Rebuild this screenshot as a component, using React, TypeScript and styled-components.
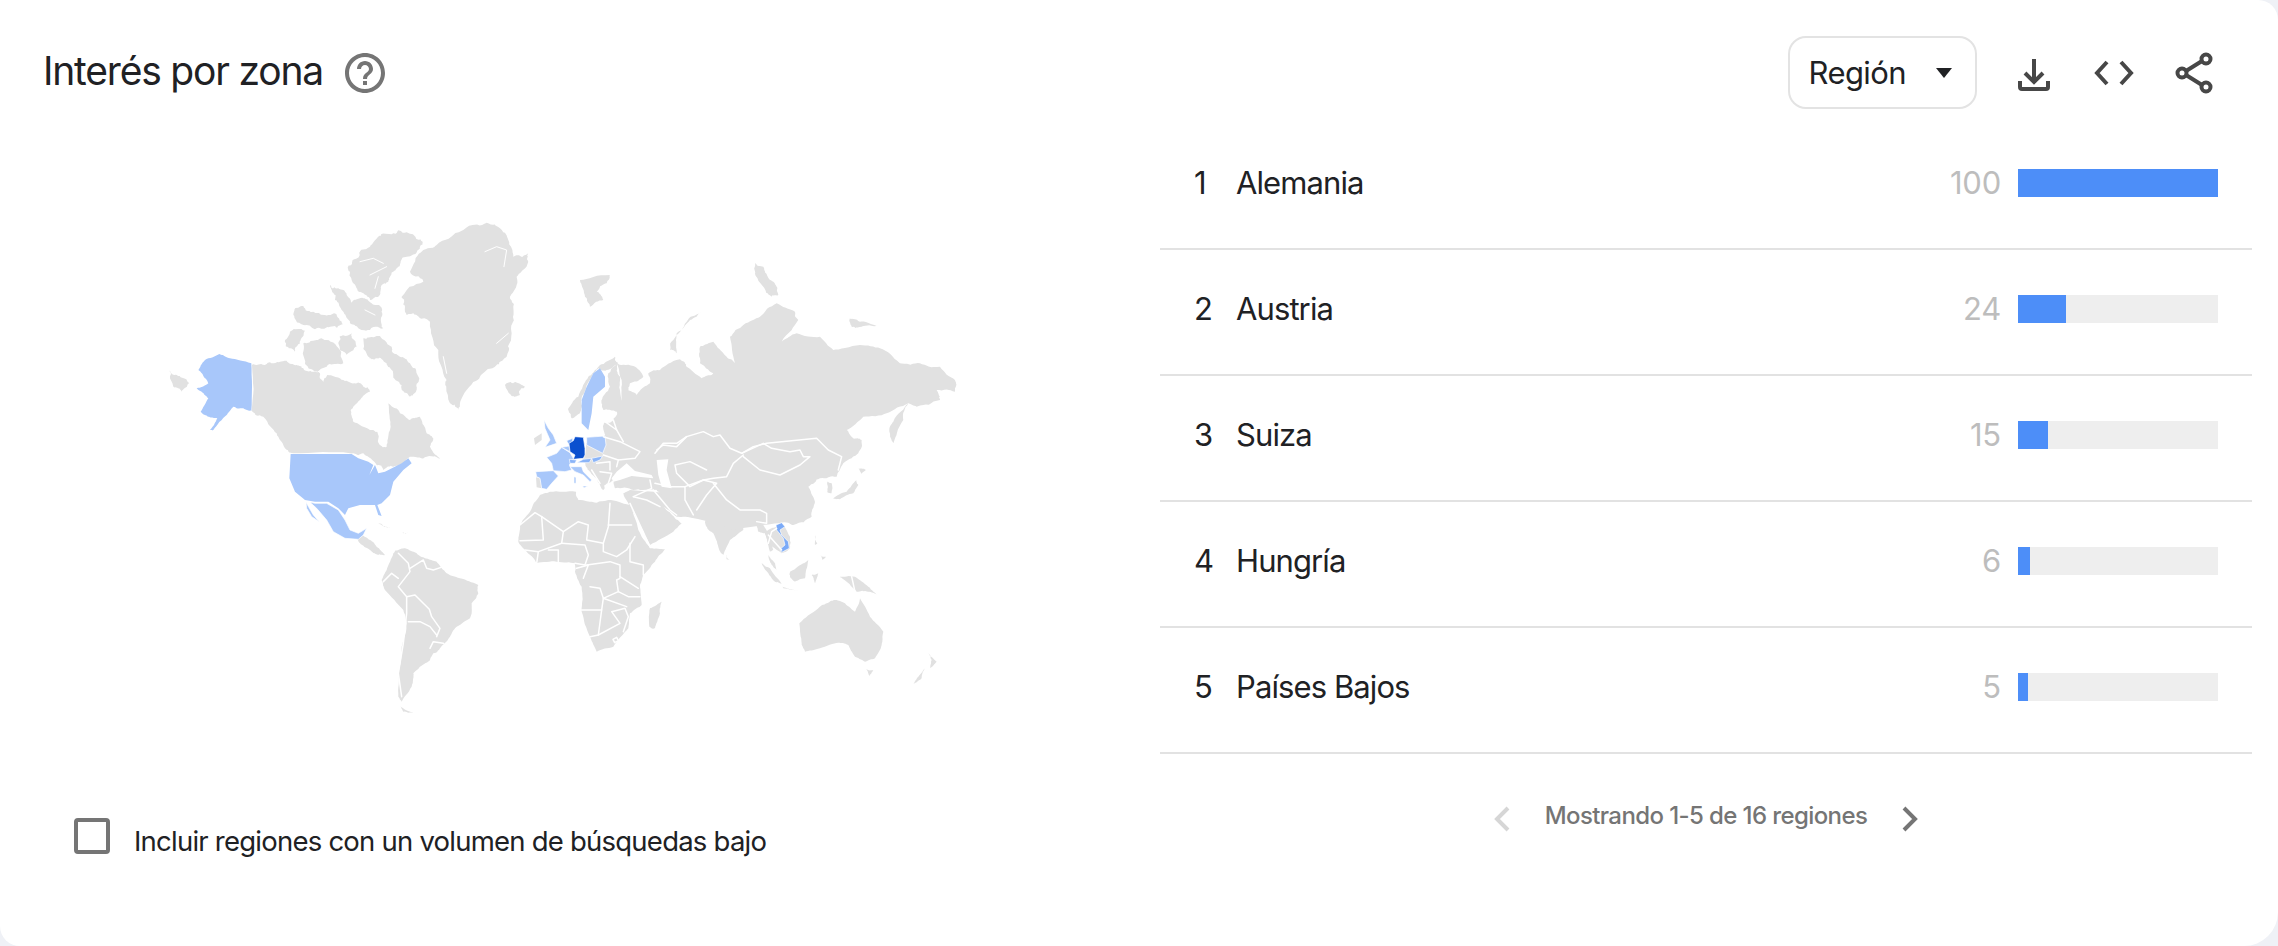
import React from "react"
import styled, { createGlobalStyle } from "styled-components"

const GREY = "#e1e1e1"
const LIGHT = "#a8c7fa"
const MID = "#8ab4f8"
const DARK = "#0b50cf"

type Row = { rank: number; name: string; value: number }

const rows: Row[] = [
  { rank: 1, name: "Alemania", value: 100 },
  { rank: 2, name: "Austria", value: 24 },
  { rank: 3, name: "Suiza", value: 15 },
  { rank: 4, name: "Hungría", value: 6 },
  { rank: 5, name: "Países Bajos", value: 5 },
]

const GlobalStyle = createGlobalStyle`
  html, body {
    margin: 0;
    background: #eff1f6;
  }
  body {
    font-family: Inter, "Noto Sans", sans-serif;
    font-weight: 375;
    color: #202124;
  }
`

const Card = styled.main`
  width: 2278px;
  height: 946px;
  box-sizing: border-box;
  padding: 36px 0 0;
  background: #fff;
  border-radius: 0 20px 34px 20px;
  overflow: hidden;
`

const Header = styled.header`
  display: flex;
  align-items: center;
  justify-content: space-between;
  height: 73px;
  padding: 0 60px 0 43px;
`

const TitleGroup = styled.div`
  display: flex;
  align-items: center;
  gap: 18px;
`

const Title = styled.h2`
  margin: 0 0 4px;
  font-size: 39px;
  font-weight: 375;
  letter-spacing: -1.2px;
  color: #202124;
`

const Actions = styled.div`
  display: flex;
  align-items: center;
  gap: 32px;
`

const Dropdown = styled.button`
  display: flex;
  align-items: center;
  gap: 30px;
  height: 73px;
  box-sizing: border-box;
  padding: 0 23px 0 19px;
  margin-right: 1px;
  background: #fff;
  border: 2px solid #e3e3e3;
  border-radius: 18px;
  font: 375 31px Inter, sans-serif;
  letter-spacing: -0.6px;
  color: #202124;
`

const Caret = styled.span`
  width: 0;
  height: 0;
  border-left: 8px solid transparent;
  border-right: 8px solid transparent;
  border-top: 10px solid #202124;
`

const Columns = styled.div`
  display: grid;
  grid-template-columns: 1160px 1092px;
`

const LeftColumn = styled.section`
  display: flex;
  flex-direction: column;
  align-items: flex-start;
`

const WorldMap = styled.svg`
  display: block;
  width: 800px;
  height: 500px;
  margin: 111px 0 0 160px;
  filter: blur(0.45px);
`

const CheckRow = styled.label`
  display: flex;
  align-items: flex-start;
  gap: 24px;
  margin: 98px 0 0 74px;
  font-size: 27.5px;
  letter-spacing: -0.77px;
  color: #202124;
`

const CheckBox = styled.span`
  display: block;
  width: 36px;
  height: 36px;
  box-sizing: border-box;
  border: 4px solid #757575;
  border-radius: 4px;
`

const CheckText = styled.span`
  margin-top: 5px;
  line-height: 36px;
`

const RightColumn = styled.section`
  padding-top: 15px;
`

const List = styled.ol`
  margin: 0;
  padding: 0;
  list-style: none;
`

const ListRow = styled.li`
  display: flex;
  align-items: flex-start;
  height: 126px;
  box-sizing: border-box;
  padding: 45px 34px 0 34px;
  border-bottom: 2px solid #e2e2e2;
  font-size: 31px;
  line-height: 27px;
`

const Rank = styled.span`
  width: 42px;
  flex: none;
`

const Name = styled.span`
  flex: 1;
  letter-spacing: -0.9px;
`

const Value = styled.span`
  margin-right: 17px;
  color: #bdbdbd;
  letter-spacing: -0.2px;
`

const Track = styled.div`
  width: 200px;
  height: 28px;
  flex: none;
  background: #eeeeee;
`

const Fill = styled.div`
  height: 100%;
  background: #4d8ef8;
`

const Pager = styled.nav`
  display: flex;
  align-items: center;
  justify-content: center;
  gap: 32px;
  padding-top: 47px;
  font-size: 24px;
  font-weight: 450;
  letter-spacing: -0.6px;
  color: #757575;
`

const PagerText = styled.span`
  margin-bottom: 6px;
`

const Chevron = styled.svg<{ $off?: boolean }>`
  display: block;
  width: 20px;
  height: 28px;
  color: ${(p) => (p.$off ? "#d6d6d6" : "#757575")};
`

const HelpIcon = () => (
  <svg width="48" height="48" viewBox="0 0 24 24" fill="#757575">
    <path d="M11 18h2v-2h-2v2zm1-16C6.48 2 2 6.48 2 12s4.48 10 10 10 10-4.48 10-10S17.52 2 12 2zm0 18c-4.41 0-8-3.59-8-8s3.59-8 8-8 8 3.59 8 8-3.59 8-8 8zm0-14c-2.21 0-4 1.79-4 4h2c0-1.1.9-2 2-2s2 .9 2 2c0 2-3 1.75-3 5h2c0-2.25 3-2.5 3-5 0-2.21-1.79-4-4-4z" />
  </svg>
)

const DownloadIcon = () => (
  <svg width="48" height="48" viewBox="0 0 48 48" fill="none" stroke="#474747" strokeWidth="4">
    <path d="M24 10v23M15 24l9 9 9-9" />
    <path d="M10 32v6a2 2 0 0 0 2 2h24a2 2 0 0 0 2-2v-6" />
  </svg>
)

const CodeIcon = () => (
  <svg width="48" height="48" viewBox="0 0 48 48" fill="none" stroke="#474747" strokeWidth="4">
    <path d="M17 13 7 24l10 11M31 13l10 11-10 11" />
  </svg>
)

const ShareIcon = () => (
  <svg width="48" height="48" viewBox="0 0 48 48" fill="none" stroke="#474747" strokeWidth="4">
    <circle cx="36" cy="10" r="4.5" />
    <circle cx="12" cy="24" r="4.5" />
    <circle cx="36" cy="38" r="4.5" />
    <path d="M16 22 32 12M16 26l16 10" />
  </svg>
)

// coasts are only outlined by hand, so break the long edges up a little
const roughen = (pts: string, amp: number) => {
  let seed = pts.length * 7 + 13
  const rnd = () => {
    seed = (seed * 16807) % 2147483647
    return seed / 2147483647 - 0.5
  }
  let p = pts.split(" ").map((s) => s.split(",").map(Number))
  for (let depth = 0; depth < 3; depth++) {
    const next: number[][] = []
    p.forEach((q, i) => {
      const r = p[(i + 1) % p.length]
      const len = Math.hypot(r[0] - q[0], r[1] - q[1])
      const a = Math.min(amp / 2 ** depth, len * 0.45)
      next.push(q, [(q[0] + r[0]) / 2 + rnd() * a, (q[1] + r[1]) / 2 + rnd() * a])
    })
    p = next
  }
  return p.map((q) => q.map((n) => n.toFixed(1)).join(",")).join(" ")
}

// each frame holds points read from a crop of the map, at 3x of its page offset
const Frame = ({ x, y, children }: { x: number; y: number; children: React.ReactNode }) => (
  <g transform={`translate(${x} ${y}) scale(0.3333)`}>{children}</g>
)

type LandProps = { items: string[]; fill?: string; edge?: boolean; rough?: number }

const Land = ({ items, fill = GREY, edge, rough = 0 }: LandProps) => (
  <g fill={fill} stroke={edge ? "#fff" : "none"} strokeWidth={edge ? 2 : 0} strokeLinejoin="round">
    {items.map((p) => (
      <polygon key={p} points={rough ? roughen(p, rough) : p} />
    ))}
  </g>
)

const Borders = ({ items, thin }: { items: string[]; thin?: boolean }) => (
  <g fill="none" stroke="#fff" strokeWidth={thin ? 3 : 4.5} strokeLinejoin="round" strokeLinecap="round">
    {items.map((p) => (
      <polyline key={p} points={p} />
    ))}
  </g>
)

const canada = [
  "366,495 405,495 430,490 470,482 500,495 520,505 545,515 570,520 580,545 592,525 640,540 680,550 700,560 720,575 690,600 662,630 670,665 720,690 745,705 750,735 770,740 782,680 775,610 810,640 840,660 870,650 890,700 910,715 900,740 930,775 890,770 850,770 820,790 790,800 760,810 740,795 700,760 660,760 490,760 465,745 440,700 400,650 365,632",
]

const arctic = [
  "660,215 668,180 690,155 720,140 745,110 790,100 830,97 878,125 870,145 830,170 810,195 790,215 775,245 755,255 745,290 720,300 700,280 680,265",
  "600,255 625,265 650,285 665,310 700,295 725,310 755,325 755,350 760,385 720,390 685,385 660,370 640,335 615,300",
  "700,415 750,408 785,440 810,470 840,490 868,535 860,570 840,590 815,555 790,530 770,490 740,475 715,470",
  "468,440 480,395 525,392 510,430 495,455",
  "520,430 560,420 590,420 630,450 640,490 590,500 555,515 525,490",
  "490,345 520,318 550,335 585,345 620,345 640,372 600,380 555,388 520,375",
  "630,408 665,400 680,440 650,465 630,450",
  "815,290 880,245 840,215 880,150 920,135 1000,90 1070,68 1110,85 1135,120 1150,170 1195,160 1195,185 1160,230 1140,290 1150,320 1145,400 1130,470 1100,495 1050,530 1010,570 985,630 960,610 950,540 925,450 900,365 860,345 830,345 825,320",
  "1125,555 1150,550 1185,560 1170,585 1145,588",
  "118,510 140,525 178,550 155,575 130,560",
]

const alaska = [
  "205,510 225,480 268,462 300,475 364,490 364,632 340,625 310,620 290,645 250,690 240,690 262,655 235,650 212,635 235,595 215,575 200,565 235,550 225,535",
]

const arcticCracks = [
  "1065,155 1100,140 1130,150 1122,200",
  "690,185 730,175 760,190",
  "720,225 770,200",
  "735,265 745,230",
  "705,330 735,345",
  "940,470 950,520",
  "1100,430 1135,400",
]

const usa = [
  "62,42 245,42 265,55 295,65 310,75 298,105 315,75 325,100 345,95 395,70 415,55 425,70 400,90 370,125 360,165 335,190 322,195 335,228 325,225 315,195 270,195 235,205 225,225 205,205 175,185 135,185 105,180 75,155 58,115",
]

const mexico = [
  "105,184 135,190 170,190 205,210 225,240 240,270 265,280 290,265 280,285 265,298 225,295 190,275 170,240 140,205 120,187",
  "108,187 130,225 148,245 125,230 110,205",
]

const southAmerica = [
  "262,297 280,287 300,300 320,320 345,345 325,345 300,330 270,310",
  "385,330 405,325 440,340 465,355 500,365 530,400 570,415 625,435 625,460 605,490 600,535 560,560 540,590 510,625 490,640 480,660 450,680 430,700 425,740 395,785 385,770 385,700 395,620 410,550 400,510 345,450 335,420 350,390 370,340",
  "385,795 430,818 400,815",
  "325,250 360,262 340,258",
  "395,275 415,278 400,280",
]

const southAmericaBorders = [
  "385,340 415,370 420,395 385,440 410,470 435,465 478,508 485,530 510,565 500,590",
  "340,425 365,400 385,415",
  "410,470 410,520 400,610 385,700 395,770",
  "415,545 450,545 480,560 500,585",
  "480,625 490,605 520,610",
  "420,385 460,360 470,385 490,390 520,380 530,395",
]

const eurasia = [
  "350,490 400,498 430,530 390,550 385,570 410,585 450,550 445,520 480,510 540,478 560,500 605,535 640,520 600,490 600,440 640,425 680,470 705,490 690,410 730,375 780,350 830,310 885,335 895,360 845,425 890,400 960,410 1000,450 1080,435 1140,445 1200,490 1260,490 1320,500 1365,540 1365,575 1310,570 1320,600 1250,620 1225,610 1160,640 1090,650 1040,690 1060,715 1085,720 1075,760 1030,790 1010,830 960,835 925,860 945,905 935,950 880,975 840,970 700,990 560,950 480,880 465,870 400,870 345,865 340,840 322,850 310,870 290,835 262,805 250,780 258,730 316,705 312,668 340,660 350,635 365,600 365,540",
]

const eurasiaIslands = [
  "345,470 355,490 320,510 295,505 275,530 258,565 243,605 240,640 215,655 205,625 235,590 265,530 300,495",
  "350,490 360,530 365,600 350,635 310,630 305,600 330,560 325,520",
  "1170,700 1180,665 1225,610 1210,660 1180,730",
  "240,240 330,225 320,250 290,275 310,300 270,320 255,290",
  "605,335 560,365 520,420 510,450 530,460 530,400 570,360",
  "765,190 790,200 810,240 830,260 835,285 815,290 790,260 765,220",
  "1050,355 1080,365 1130,378 1085,380 1055,380",
]

const sweden = ["300,505 315,530 315,560 280,590 275,640 265,690 245,670 245,600 260,560 280,520"]

const asiaBorders = [
  "470,750 490,735 530,740 560,710 610,695 640,710 660,705 690,745 725,760 790,730 815,745 870,755 900,750 910,770 930,770 900,795 840,825 780,810 730,770",
  "725,760 760,740 800,730 950,715 985,750 1025,770 1015,810",
  "730,765 700,790 680,830 640,835 610,840 570,860 530,820 525,795 570,785 620,810",
  "640,850 680,900 720,930 780,930 800,940 800,970 770,965",
  "465,850 510,860 555,860 555,900 580,945",
  "555,860 610,840 650,850 620,885 590,930",
]

const europeGrey = ["42,115 65,100 65,120 45,135", "48,232 60,235 65,265 50,262", "197,145 230,155 215,165 197,165"]

const europeHoles = [
  "275,235 290,215 320,190 345,213 395,225 400,235 370,232 335,228 300,240 280,245",
  "410,180 445,178 440,210 455,265 425,260 415,225",
]

const europeLight = [
  "200,112 255,108 258,135 248,160 200,135",
  "80,172 110,160 125,142 150,158 160,175 148,195 155,210 135,215 100,212 95,190",
  "47,215 100,212 115,228 95,250 80,268 65,265 60,235 50,230",
  "72,60 85,85 100,105 110,130 75,142 90,120 75,85",
  "125,142 147,138 150,155",
  "150,200 185,200 190,215 215,240 210,245 190,225 165,215",
  "162,230 168,232 168,250 162,250",
  "188,258 203,258 192,264",
]

const europeMid = [
  "140,122 158,115 158,135 147,135",
  "148,178 170,180 165,190 150,190",
  "190,178 215,175 208,188 170,188",
  "215,175 248,168 240,180 220,188",
]

const germany = ["165,110 190,112 195,145 195,165 190,175 160,178 165,165 150,155 147,130 160,122"]

const europeBorders = [
  "250,110 300,125 360,155 345,175 295,180",
  "290,90 310,125",
  "255,65 290,90 280,60",
  "250,165 295,180 290,200",
  "230,190 270,185 270,210",
  "215,210 240,250",
  "240,215 275,220 265,250",
  "390,240 395,265 340,290",
  "405,160 430,130 470,130 500,110",
  "400,270 450,330 470,345",
  "340,290 380,300 420,320",
]

const africa = [
  "30,75 60,35 90,-15 120,-25 198,-25 205,0 260,8 295,0 360,15 385,90 420,145 465,148 435,185 400,225 390,255 395,315 360,340 355,385 310,440 260,455 240,410 215,335 215,260 195,215 195,190 140,185 80,190 45,150 25,125",
  "455,305 450,340 435,385 418,380 420,325 440,315",
]

const southAsia = [
  "355,10 340,-20 360,-30 640,-10 590,60 540,50 500,50 460,20 495,55 515,70 490,95 420,135 395,85",
  "585,65 610,30 640,5 660,25 700,50 700,90 660,120 640,165 628,150 610,100 590,80",
  "730,50 760,30 775,45 760,75 775,100 790,150 780,155 765,100 745,95 735,70",
  "650,165 658,178 650,178",
]

const africaBorders = [
  "95,50 160,95 155,130",
  "95,50 100,120 30,122",
  "30,75 75,38 95,50",
  "160,95 205,65 235,75 230,120 280,130 295,80 300,10",
  "295,75 365,75",
  "280,130 280,155 320,170 350,150 375,110",
  "360,130 360,185 400,195 400,225",
  "155,130 225,135 235,165 225,195 195,190",
  "230,195 300,185 330,195 330,235 320,240 325,275",
  "240,260 270,265 280,295 325,275 355,290 390,290",
  "215,330 275,330 280,295 350,320",
  "275,330 265,405 240,410",
  "265,405 330,370 305,335 345,325 355,350 340,395",
  "330,230 385,265",
  "80,190 85,155 155,130",
  "115,150 145,150 145,185",
  "45,150 85,155",
  "200,205 235,195 220,235",
  "360,10 420,140",
  "309,418 320,412 325,422 314,428 309,418",
]

const pacific = [
  "95,205 130,195 150,230 150,265 125,280 85,250 75,220",
  "85,285 105,310 110,330 95,315",
  "65,308 90,325 125,372 105,365 85,340",
  "150,335 190,310 205,300 195,355 165,365 150,350",
  "125,380 180,392 130,385",
  "215,345 235,340 225,370",
  "225,225 232,250 225,255",
  "240,285 258,290 248,300",
  "300,350 345,350 385,380 412,405 385,395 350,395 320,365",
  "178,490 235,445 260,430 290,420 315,430 345,455 360,415 390,470 430,515 425,555 405,595 375,605 345,590 325,555 295,548 240,565 195,575 185,550",
  "378,628 400,630 388,648",
  "565,580 590,605 570,625 575,600",
  "555,625 545,655 520,672 535,650",
  "280,115 320,95 350,60 355,75 340,100 300,118",
  "355,25 378,30 365,42",
  "262,65 275,70 275,100 262,95",
]

const vietnam = [
  "108,195 125,188 135,200 120,210 125,225 145,245 148,265 125,277 120,268 135,255 130,235 110,210",
]

const pacificBorders = ["85,250 95,215 110,205", "85,225 125,270", "335,350 345,395"]

const MapDrawing = () => (
  <WorldMap viewBox="160 220 800 500" role="img" aria-label="Mapa de interés por zona">
    <Frame x={130} y={200}>
      <Land items={canada} rough={12} />
      <Land items={arctic} rough={18} />
      <Land items={alaska} fill={LIGHT} rough={6} />
      <Borders items={arcticCracks} thin />
    </Frame>
    <Frame x={510} y={500}>
      <Land items={africa} rough={6} />
      <Land items={southAsia} rough={5} />
    </Frame>
    <Frame x={500} y={200}>
      <Land items={eurasia} rough={10} />
      <Land items={eurasiaIslands} rough={10} />
    </Frame>
    <Frame x={270} y={440}>
      <Land items={southAmerica} rough={6} />
      <Land items={usa} fill={LIGHT} />
      <Land items={mexico} fill={LIGHT} edge />
      <Borders items={southAmericaBorders} />
    </Frame>
    <Frame x={500} y={200}>
      <Land items={sweden} fill={LIGHT} />
      <Borders items={asiaBorders} />
    </Frame>
    <Frame x={510} y={500}>
      <Borders items={africaBorders} />
    </Frame>
    <Frame x={740} y={460}>
      <Land items={pacific} rough={5} />
      <Land items={vietnam} fill="#7baaf7" edge />
      <Borders items={pacificBorders} />
    </Frame>
    <Frame x={520} y={400}>
      <Land items={europeGrey} />
      <Land items={europeHoles} fill="#fff" />
      <Land items={europeLight} fill={LIGHT} edge />
      <Land items={europeMid} fill={MID} edge />
      <Land items={germany} fill={DARK} edge />
      <Borders items={europeBorders} />
    </Frame>
  </WorldMap>
)

const App: React.FC = () => {
  return (
    <>
      <GlobalStyle />
      <Card>
        <Header>
          <TitleGroup>
            <Title>Interés por zona</Title>
            <HelpIcon />
          </TitleGroup>
          <Actions>
            <Dropdown>
              Región
              <Caret />
            </Dropdown>
            <DownloadIcon />
            <CodeIcon />
            <ShareIcon />
          </Actions>
        </Header>
        <Columns>
          <LeftColumn>
            <MapDrawing />
            <CheckRow>
              <CheckBox />
              <CheckText>Incluir regiones con un volumen de búsquedas bajo</CheckText>
            </CheckRow>
          </LeftColumn>
          <RightColumn>
            <List>
              {rows.map((row) => (
                <ListRow key={row.rank}>
                  <Rank>{row.rank}</Rank>
                  <Name>{row.name}</Name>
                  <Value>{row.value}</Value>
                  <Track>
                    <Fill style={{ width: `${row.value}%` }} />
                  </Track>
                </ListRow>
              ))}
            </List>
            <Pager>
              <Chevron $off viewBox="0 0 20 28" fill="none" stroke="currentColor" strokeWidth="4">
                <path d="M15 3 4 14l11 11" />
              </Chevron>
              <PagerText>Mostrando 1-5 de 16 regiones</PagerText>
              <Chevron viewBox="0 0 20 28" fill="none" stroke="currentColor" strokeWidth="4">
                <path d="m5 3 11 11-11 11" />
              </Chevron>
            </Pager>
          </RightColumn>
        </Columns>
      </Card>
    </>
  )
}

export default App
